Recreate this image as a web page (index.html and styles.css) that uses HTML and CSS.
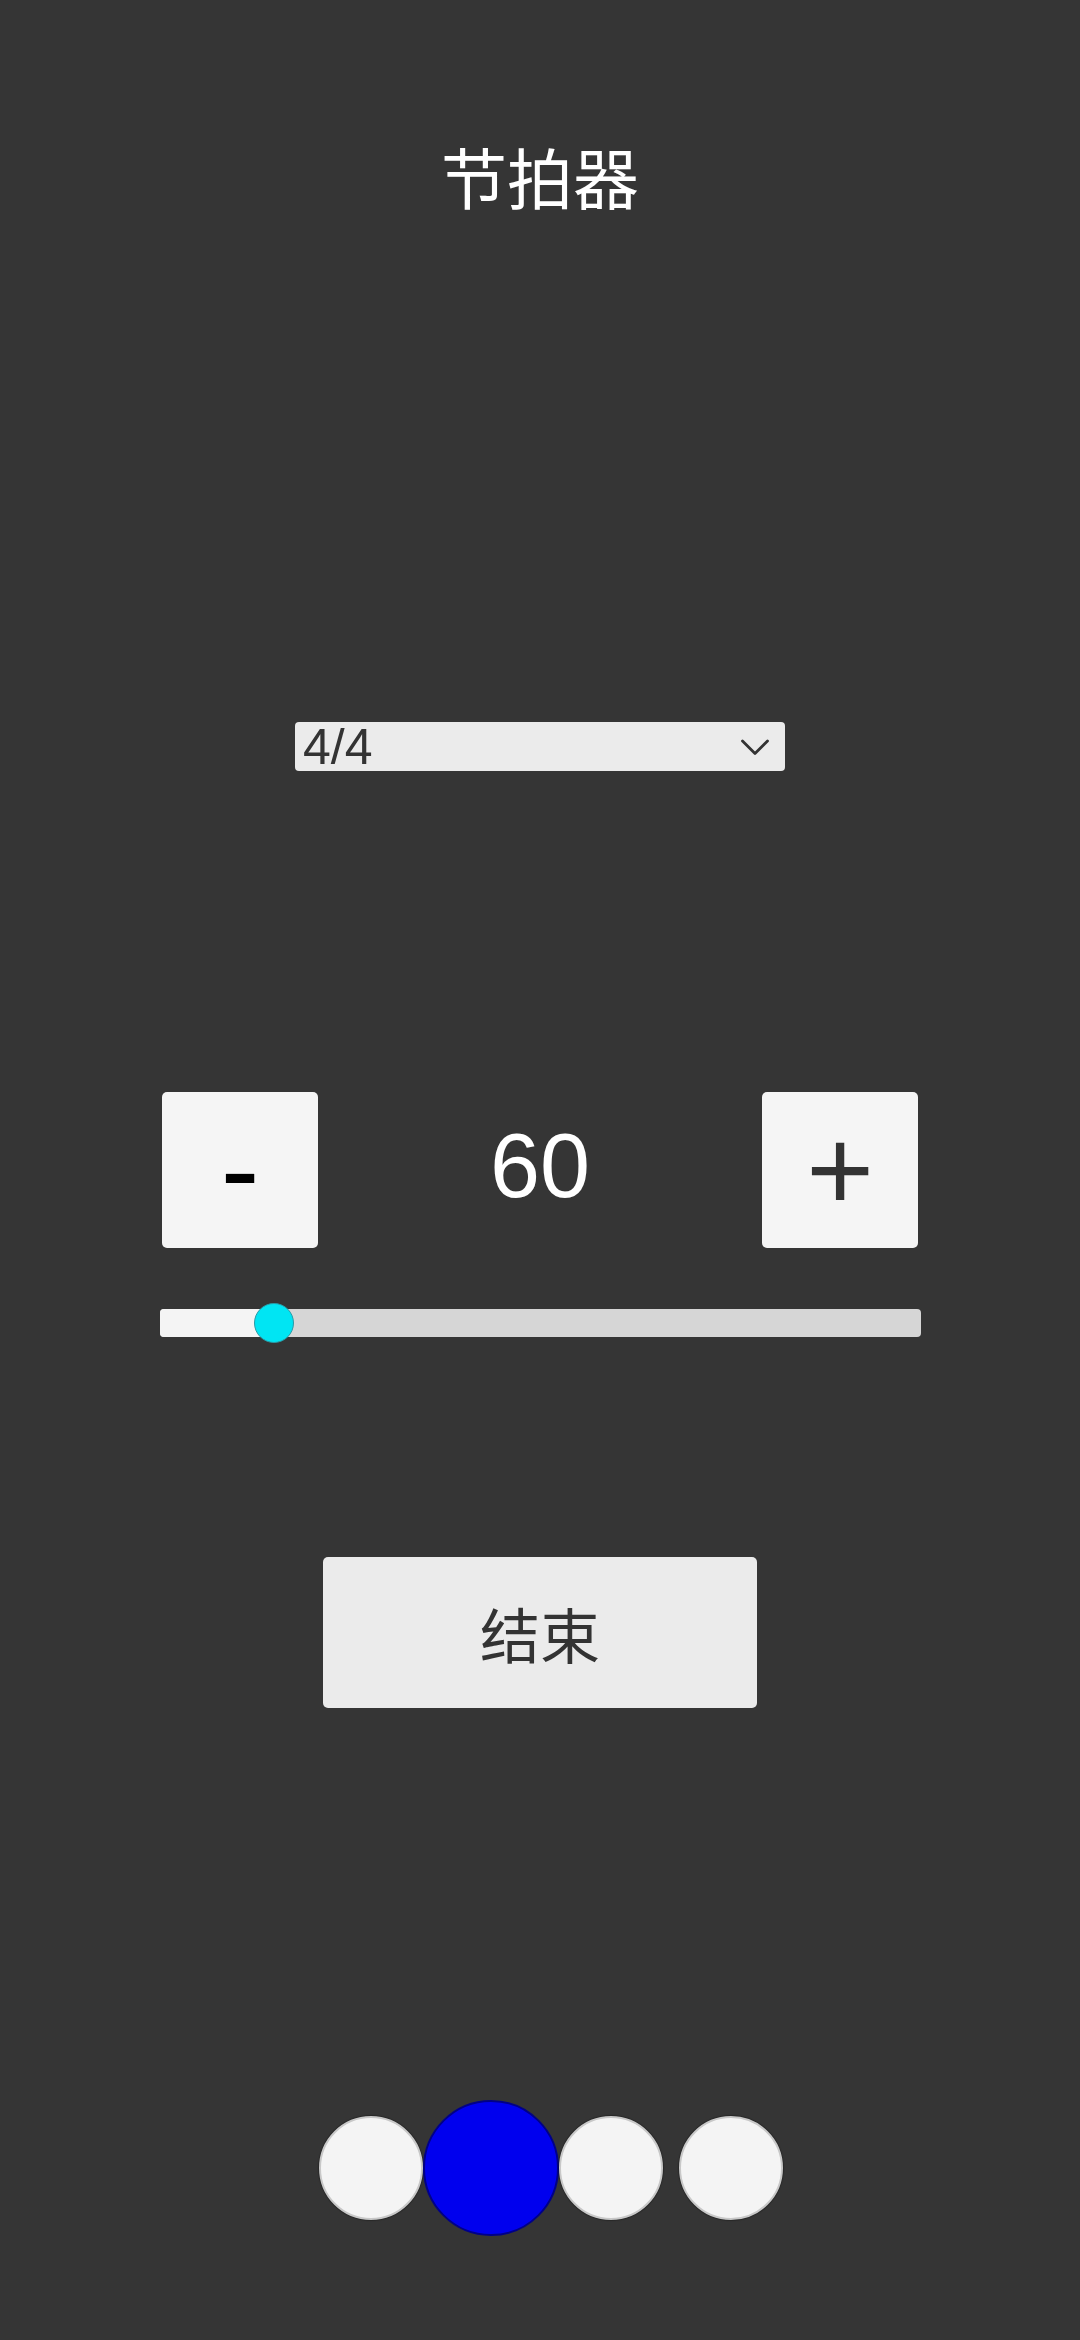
FILE: index.html
```html
<!DOCTYPE html>
<html lang="zh-CN">
<head>
<meta charset="utf-8">
<title>节拍器</title>
<link rel="stylesheet" href="styles.css">
</head>
<body>
<main class="app">
  <h1 class="title">节拍器</h1>

  <div class="select">
    <span class="select-value">4/4</span>
    <svg class="chevron" width="28" height="17" viewBox="0 0 28 17">
      <polyline points="1.5,2 14,14.5 26.5,2" fill="none" stroke="#333" stroke-width="2.8" stroke-linecap="round" stroke-linejoin="round"/>
    </svg>
  </div>

  <div class="bpm-row">
    <div class="step-btn minus">-</div>
    <div class="bpm-value">60</div>
    <div class="step-btn plus">+</div>
  </div>

  <div class="slider">
    <div class="slider-fill" style="width: 114px"></div>
    <div class="slider-thumb" style="left: 94px"></div>
  </div>

  <div class="end-btn">结束</div>

  <div class="beats">
    <div class="beat-slot"><div class="beat"></div></div>
    <div class="beat-slot"><div class="beat active"></div></div>
    <div class="beat-slot"><div class="beat"></div></div>
    <div class="beat-slot"><div class="beat"></div></div>
  </div>
</main>
</body>
</html>
```

FILE: styles.css
```css
html, body {
  margin: 0;
  padding: 0;
}

body {
  background: #353535;
  width: 1080px;
  height: 2340px;
  overflow: hidden;
  font-family: "Liberation Sans", Arial, "Noto Sans CJK SC", sans-serif;
}

.app {
  display: flex;
  flex-direction: column;
  align-items: center;
}

.title {
  margin: 142px 0 0 0;
  font-family: "Noto Sans CJK SC", "Noto Sans", sans-serif;
  font-weight: 400;
  font-size: 66px;
  line-height: 66px;
  color: #ffffff;
}

.select {
  margin-top: 514px;
  width: 490px;
  height: 49px;
  box-sizing: border-box;
  background: #ebebeb;
  border-radius: 4px;
  display: flex;
  align-items: center;
  justify-content: space-between;
  padding: 0 16px 0 8px;
}

.select-value {
  font-size: 50px;
  line-height: 49px;
  color: #333333;
  margin-top: 1px;
}

.chevron {
  display: block;
  margin-top: 2px;
}

.bpm-row {
  margin-top: 321px;
  width: 756px;
  height: 156px;
  display: flex;
  align-items: center;
}

.step-btn {
  width: 156px;
  height: 156px;
  background: #f5f5f5;
  border-radius: 5px;
  display: flex;
  align-items: center;
  justify-content: center;
  font-size: 116px;
  line-height: 116px;
}

.step-btn.minus {
  color: #000000;
}

.step-btn.plus {
  color: #333333;
}

.bpm-value {
  flex: 1;
  text-align: center;
  font-size: 90px;
  line-height: 90px;
  color: #ffffff;
  padding-bottom: 8px;
}

.slider {
  position: relative;
  margin-top: 61px;
  width: 761px;
  height: 28px;
  background: #d6d6d6;
  border-radius: 4px;
}

.slider-fill {
  height: 100%;
  background: #f4f4f4;
  border-radius: 4px 0 0 4px;
}

.slider-thumb {
  position: absolute;
  top: -6px;
  width: 40px;
  height: 40px;
  box-sizing: border-box;
  border-radius: 50%;
  background: #00e5f3;
  border: 1.5px solid #2a9aa6;
}

.end-btn {
  margin-top: 220px;
  width: 434px;
  height: 151px;
  background: #ebebeb;
  border-radius: 5px;
  display: flex;
  align-items: center;
  justify-content: center;
  font-family: "Noto Sans CJK SC", "Noto Sans", sans-serif;
  font-size: 60px;
  line-height: 60px;
  color: #333333;
}

.beats {
  margin-top: 392px;
  margin-left: 22px;
  display: flex;
  height: 136px;
  align-items: center;
}

.beat-slot {
  width: 120px;
  display: flex;
  justify-content: center;
}

.beat {
  width: 104px;
  height: 104px;
  box-sizing: border-box;
  border-radius: 50%;
  background: #f4f4f4;
  border: 2px solid #c8c8c8;
  box-shadow: 0 0 1px 1px rgba(0, 0, 0, 0.25);
}

.beat.active {
  width: 136px;
  height: 136px;
  margin: 0 -16px;
  background: #0000ee;
  border: 2px solid #000088;
  box-shadow: none;
}
```
